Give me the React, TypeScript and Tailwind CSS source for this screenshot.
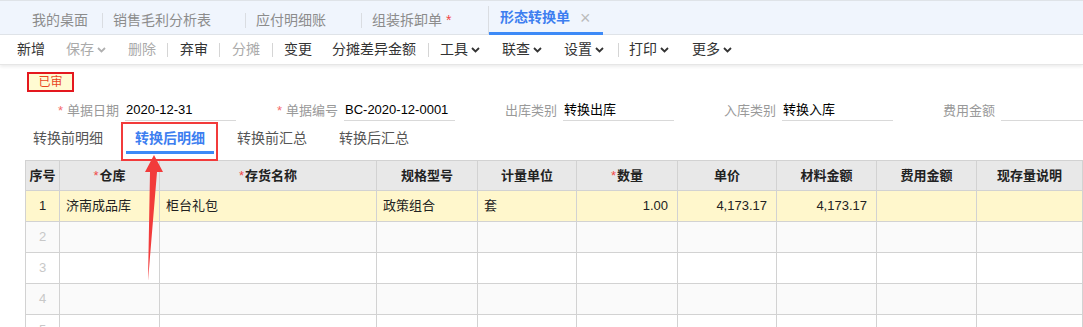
import React from 'react';

const FONT = '"Liberation Sans", "Noto Sans CJK SC", sans-serif';

function Chevron({ gray }: { gray?: boolean }) {
  return (
    <svg width="9" height="6" viewBox="0 0 9 6" className="ml-[3px]">
      <polyline
        points="1,1 4.5,4.5 8,1"
        fill="none"
        stroke={gray ? '#b0b0b0' : '#333'}
        strokeWidth="1.8"
      />
    </svg>
  );
}

// w = distance to the next button's text, sep = right margin of the divider
const tools = [
  { label: '新增', w: 'w-[49px]' },
  { label: '保存', w: 'w-[62px]', gray: true, menu: true },
  { label: '删除', w: 'w-[52px]', gray: true, sep: 'mr-[12px]' },
  { label: '弃审', w: 'w-[52px]', sep: 'mr-[12px]' },
  { label: '分摊', w: 'w-[52px]', gray: true, sep: 'mr-[11px]' },
  { label: '变更', w: 'w-[48px]' },
  { label: '分摊差异金额', w: 'w-[108px]', sep: 'mr-[11px]' },
  { label: '工具', w: 'w-[62px]', menu: true },
  { label: '联查', w: 'w-[62px]', menu: true },
  { label: '设置', w: 'w-[65px]', menu: true, sep: 'mr-[10px]' },
  { label: '打印', w: 'w-[63px]', menu: true },
  { label: '更多', w: 'w-[60px]', menu: true },
];

function Field({ label, value, required }: { label: string; value?: string; required?: boolean }) {
  return (
    <div className="flex w-[219px] items-center">
      <div className="w-[108px] pr-[6px] text-right text-[13px] text-[#999]">
        {required && <span className="mr-[4px] text-[#f56c6c]">*</span>}
        {label}
      </div>
      <div className="h-[21px] w-[111px] border-b border-[#d9d9d9] pl-[1px] text-[13px] leading-[19px] text-black">
        {value}
      </div>
    </div>
  );
}

const cols = [
  { title: '序号' },
  { title: '仓库', req: true },
  { title: '存货名称', req: true },
  { title: '规格型号' },
  { title: '计量单位' },
  { title: '数量', req: true },
  { title: '单价' },
  { title: '材料金额' },
  { title: '费用金额' },
  { title: '现存量说明' },
];

const firstRow = ['1', '济南成品库', '柜台礼包', '政策组合', '套', '1.00', '4,173.17', '4,173.17', '', ''];

export default function App() {
  return (
    <div
      className="relative h-[327px] w-[1083px] overflow-hidden bg-white"
      style={{ fontFamily: FONT }}
    >
      {/* Top tabs */}
      <div className="flex h-[35px] items-center border-y border-[#dfe3e8] bg-[#f0f5fd] pt-[5px] text-[14px] text-[#8c8c8c]">
        <div className="w-[102px] pl-[32px]">我的桌面</div>
        <div className="h-[15px] w-px bg-[#dadde2]" />
        <div className="w-[142px] pl-[10px]">销售毛利分析表</div>
        <div className="h-[15px] w-px bg-[#dadde2]" />
        <div className="w-[115px] pl-[10px]">应付明细账</div>
        <div className="h-[15px] w-px bg-[#dadde2]" />
        <div className="w-[126px] pl-[10px]">
          组装拆卸单 <span className="text-[#f04848]">*</span>
        </div>
        <div className="relative flex h-full w-[115px] items-center border-l border-[#dadde2] pb-[5px] pl-[11px]">
          <span className="font-bold text-[#3d7ef0]">形态转换单</span>
          <span className="ml-[10px] text-[18px] leading-none text-[#bbb]">×</span>
          <div className="absolute bottom-[-1px] left-0 h-[3px] w-full bg-[#3d8af7]" />
        </div>
      </div>

      {/* Toolbar */}
      <div className="flex h-[30px] items-center border-b border-[#e6e6e6] pl-[17px] text-[14px] shadow-[0_2px_3px_rgba(0,0,0,0.07)]">
        {tools.map((t) => (
          <div
            key={t.label}
            className={`flex shrink-0 items-center ${t.w} ${t.gray ? 'text-[#aaa]' : 'text-[#333]'}`}
          >
            {t.label}
            {t.menu && <Chevron gray={t.gray} />}
            {t.sep && <div className={`ml-auto h-[14px] w-px bg-[#d5d5d5] ${t.sep}`} />}
          </div>
        ))}
      </div>

      {/* Status stamp */}
      <div className="ml-[27px] mt-[7px] flex h-[20px] w-[47px] items-center justify-center border-2 border-[#e4181e] bg-[#fffbd2] text-[12px] text-[#e8461e]">
        已审
      </div>

      {/* Header fields */}
      <div className="ml-[17px] mt-[8px] flex">
        <Field label="单据日期" value="2020-12-31" required />
        <Field label="单据编号" value="BC-2020-12-0001" required />
        <Field label="出库类别" value="转换出库" />
        <Field label="入库类别" value="转换入库" />
        <Field label="费用金额" />
      </div>

      {/* Sub tabs */}
      <div className="ml-[17px] flex h-[39px] text-[14px]">
        {['转换前明细', '转换后明细', '转换前汇总', '转换后汇总'].map((t, i) => (
          <div key={t} className="flex w-[102px] flex-col items-center pt-[9px]">
            <span className={`leading-[16px] ${i === 1 ? 'font-bold text-[#3d7ef0]' : 'text-[#555]'}`}>{t}</span>
            {i === 1 && <div className="mt-[5px] h-[3px] w-[88px] bg-[#3d8af7]" />}
          </div>
        ))}
      </div>

      {/* Grid */}
      <div className="ml-[25px] grid grid-cols-[34px_100px_217px_101px_99px_101px_99px_100px_100px_1fr] border-l border-t border-[#d2d2d2] text-[13px]">
        {cols.map((c) => (
          <div
            key={c.title}
            className="flex h-[30px] items-center justify-center border-b border-r border-[#d2d2d2] bg-[#e8e8e8] font-bold text-[#222]"
          >
            {c.req && <span className="mr-[1px] font-normal text-[#f04848]">*</span>}
            {c.title}
          </div>
        ))}
        {firstRow.map((v, i) => (
          <div
            key={'r1' + i}
            className={`flex h-[31px] items-center border-b border-r border-[#d2d2d2] bg-[#fff7cc] text-[#222] ${
              i === 0 ? 'justify-center' : i >= 5 ? 'justify-end pr-[9px]' : 'pl-[6px]'
            }`}
          >
            {v}
          </div>
        ))}
        {[2, 3, 4, 5].map((n) =>
          cols.map((c, i) => (
            <div
              key={n + c.title}
              className={`flex h-[31px] items-center justify-center border-b border-r border-[#d2d2d2] text-[#c8c8c8] ${
                n % 2 === 0 ? 'bg-[#fafafa]' : 'bg-white'
              }`}
            >
              {i === 0 ? n : ''}
            </div>
          ))
        )}
      </div>

      {/* Annotation: red box + arrow */}
      <div className="absolute left-[121px] top-[122px] h-[39px] w-[97px] border-2 border-[#f23b3b]" />
      <svg className="absolute left-0 top-0" width="1083" height="327">
        <polygon points="154,155 163,172 157,172 148,281 150,172 145,172" fill="#f23b3b" />
      </svg>
    </div>
  );
}
